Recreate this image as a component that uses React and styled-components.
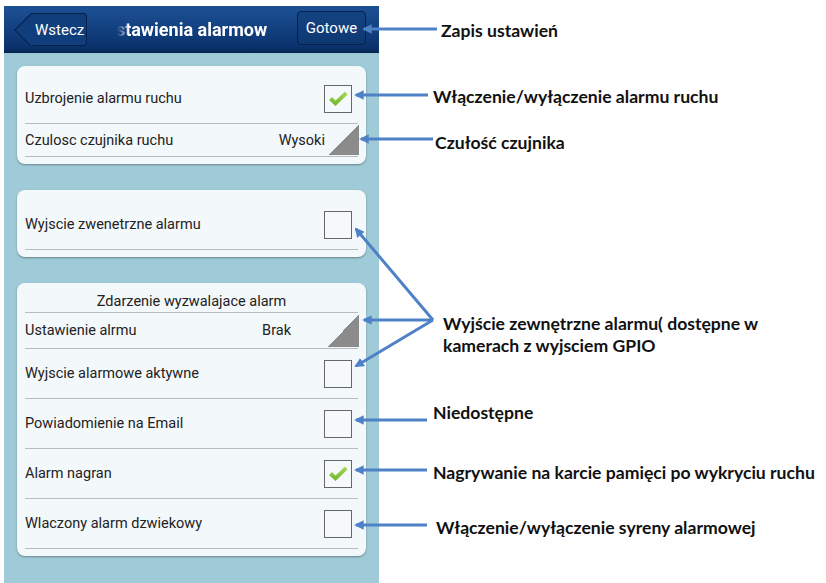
import React from "react";
import styled, { createGlobalStyle } from "styled-components";

const Global = createGlobalStyle`
  html, body { margin: 0; padding: 0; background: #fff; }
  * { box-sizing: border-box; }
`;

const Page = styled.div`
  position: relative;
  width: 826px;
  height: 583px;
  overflow: hidden;
  display: flex;
  align-items: flex-start;
  padding: 6px 0 0 4px;
  background: #fff;
`;

const Phone = styled.div`
  width: 375px;
  height: 577px;
  background: #9fcad7;
  display: flex;
  flex-direction: column;
  font-family: Roboto, "Noto Sans", sans-serif;
`;

const Header = styled.div`
  height: 47px;
  flex: none;
  display: flex;
  align-items: center;
  padding: 0 13px 0 0;
  background: linear-gradient(#1c5195, #0c3470 85%, #082a5c);
  border-bottom: 1px solid #06214b;
`;

const BackButton = styled.div`
  position: relative;
  height: 33px;
  margin-left: 27px;
  margin-top: 1px;
  padding: 0 2px 0 4px;
  display: flex;
  align-items: center;
  border: 1px solid #05204a;
  border-left: none;
  border-radius: 0 4px 4px 0;
  background: #103e7c;
  color: #fff;
  font-size: 15px;
  &::before {
    content: "";
    position: absolute;
    left: -11.6px;
    top: 3.8px;
    width: 23.3px;
    height: 23.3px;
    transform: rotate(45deg);
    background: #103e7c;
    border-left: 1px solid #05204a;
    border-bottom: 1px solid #05204a;
  }
`;

const Label = styled.span`
  position: relative;
`;

const TitleWrap = styled.div`
  flex: 1;
  display: flex;
  justify-content: center;
`;

const Title = styled.div`
  width: 150px;
  overflow: hidden;
  display: flex;
  justify-content: flex-end;
  white-space: nowrap;
  color: #fff;
  font-weight: 700;
  font-size: 18px;
  -webkit-mask-image: linear-gradient(to right, transparent 0, rgba(0,0,0,0.4) 6px, #000 12px);
  mask-image: linear-gradient(to right, transparent 0, rgba(0,0,0,0.4) 6px, #000 12px);
`;

const DoneButton = styled.div`
  height: 34px;
  width: 69px;
  margin-top: -3px;
  display: flex;
  align-items: center;
  justify-content: center;
  border: 1px solid #05204a;
  border-radius: 4px;
  background: linear-gradient(#134381, #0e3872);
  color: #fff;
  font-size: 15px;
`;

const Content = styled.div`
  display: flex;
  flex-direction: column;
  gap: 26px;
  padding: 13px 13px 0;
`;

const Card = styled.div`
  background: #f3f8fb;
  border-radius: 8px;
  box-shadow: 0 1px 2px rgba(0, 0, 0, 0.35);
  padding: ${(p) => p.$top || 8}px 8px 7px;
  display: flex;
  flex-direction: column;
`;

const Row = styled.div`
  height: ${(p) => p.$h || 50}px;
  display: flex;
  align-items: center;
  justify-content: space-between;
  border-bottom: 1px solid #b7bcc1;
  color: #222;
  font-size: 14.5px;
`;

const HeadRow = styled(Row)`
  justify-content: center;
  height: 22px;
  padding-bottom: 1px;
`;

const SelectRow = styled(Row)`
  height: ${(p) => p.$h || 34}px;
  align-items: stretch;
`;

const RowText = styled.span`
  align-self: center;
`;

const Value = styled.span`
  align-self: center;
  margin-left: auto;
  margin-right: ${(p) => p.$mr}px;
`;

const Corner = styled.div`
  width: 31px;
  margin: 1px -1px 1px 0;
  background: linear-gradient(to bottom right, transparent 50%, #8b8b8b 50%);
`;

const Box = styled.div`
  width: 28px;
  height: 28px;
  margin-right: 6px;
  border: 1.5px solid #676767;
  background: #f6f9fb;
  display: flex;
  align-items: center;
  justify-content: center;
`;

const Overlay = styled.svg`
  position: absolute;
  left: 0;
  top: 0;
  pointer-events: none;
`;

const Note = styled.div`
  position: absolute;
  left: ${(p) => p.$x}px;
  top: ${(p) => p.$y - 11}px;
  font-family: Lato, "Open Sans", sans-serif;
  font-weight: 700;
  font-size: 17.6px;
  line-height: 22px;
  color: #111;
  white-space: nowrap;
`;

function Check({ on }) {
  return (
    <Box>
      {on && (
        <svg width="22" height="20" viewBox="0 0 22 20">
          <defs>
            <linearGradient id="g" x1="0" y1="0" x2="0" y2="1">
              <stop offset="0" stopColor="#a8d957" />
              <stop offset="1" stopColor="#6cb52d" />
            </linearGradient>
          </defs>
          <path d="M2 11 L5 8 L8.5 11.5 L18 2.5 L20.5 5.5 L8.5 17 Z" fill="url(#g)" />
        </svg>
      )}
    </Box>
  );
}

const arrows = [
  [437, 29, 364, 29],
  [428, 95, 356, 95],
  [433, 139, 361, 139],
  [433, 320, 356, 229],
  [433, 320, 364, 320],
  [433, 320, 356, 366],
  [427, 420, 356, 420],
  [427, 470, 356, 470],
  [427, 525, 356, 525],
];

export default function App() {
  return (
    <Page>
      <Global />
      <Phone>
        <Header>
          <BackButton>
            <Label>Wstecz</Label>
          </BackButton>
          <TitleWrap>
            <Title>Ustawienia alarmow</Title>
          </TitleWrap>
          <DoneButton>Gotowe</DoneButton>
        </Header>
        <Content>
          <Card>
            <Row>
              <RowText>Uzbrojenie alarmu ruchu</RowText>
              <Check on />
            </Row>
            <SelectRow $h={33}>
              <RowText>Czulosc czujnika ruchu</RowText>
              <Value $mr={3}>Wysoki</Value>
              <Corner />
            </SelectRow>
          </Card>
          <Card $top={10}>
            <Row>
              <RowText>Wyjscie zwenetrzne alarmu</RowText>
              <Check />
            </Row>
          </Card>
          <Card>
            <HeadRow>Zdarzenie wyzwalajace alarm</HeadRow>
            <SelectRow $h={36}>
              <RowText>Ustawienie alrmu</RowText>
              <Value $mr={37}>Brak</Value>
              <Corner />
            </SelectRow>
            <Row>
              <RowText>Wyjscie alarmowe aktywne</RowText>
              <Check />
            </Row>
            <Row>
              <RowText>Powiadomienie na Email</RowText>
              <Check />
            </Row>
            <Row>
              <RowText>Alarm nagran</RowText>
              <Check on />
            </Row>
            <Row>
              <RowText>Wlaczony alarm dzwiekowy</RowText>
              <Check />
            </Row>
          </Card>
        </Content>
      </Phone>

      <Overlay width="826" height="583" viewBox="0 0 826 583">
        <defs>
          <marker id="ah" viewBox="0 0 10 10" refX="8" refY="5" markerWidth="3.2" markerHeight="3.2" orient="auto">
            <path d="M0 0 L10 5 L0 10 Z" fill="#4f81c7" />
          </marker>
        </defs>
        {arrows.map(([x1, y1, x2, y2], i) => (
          <line key={i} x1={x1} y1={y1} x2={x2} y2={y2} stroke="#4f81c7" strokeWidth="3" markerEnd="url(#ah)" />
        ))}
      </Overlay>

      <Note $x={441} $y={31}>Zapis ustawień</Note>
      <Note $x={433} $y={97}>Włączenie/wyłączenie alarmu ruchu</Note>
      <Note $x={435} $y={143}>Czułość czujnika</Note>
      <Note $x={443} $y={324}>
        Wyjście zewnętrzne alarmu( dostępne w<br />kamerach z wyjsciem GPIO
      </Note>
      <Note $x={433} $y={413}>Niedostępne</Note>
      <Note $x={433} $y={473}>Nagrywanie na karcie pamięci po wykryciu ruchu</Note>
      <Note $x={436} $y={528}>Włączenie/wyłączenie syreny alarmowej</Note>
    </Page>
  );
}
